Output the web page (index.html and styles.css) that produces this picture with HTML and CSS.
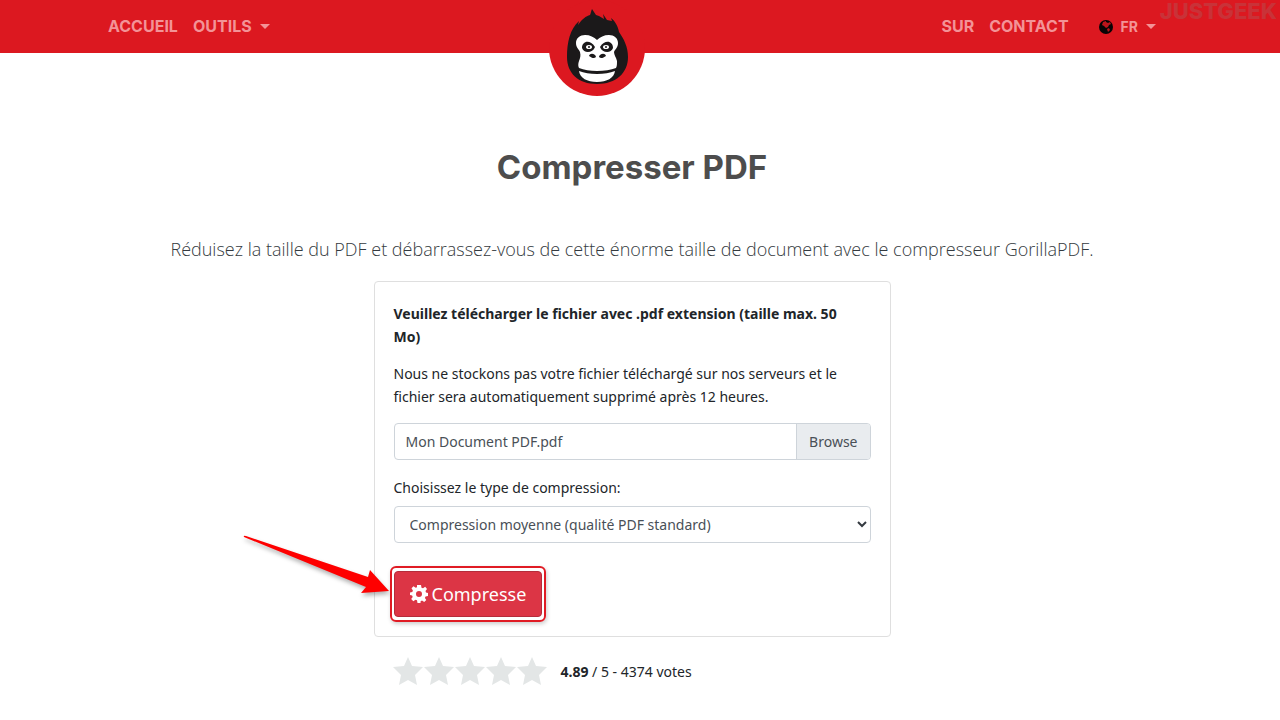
FILE: index.html
```html
<!DOCTYPE html>
<html lang="fr">
<head>
  <meta charset="UTF-8">
  <meta name="viewport" content="width=device-width, initial-scale=1.0">
  <title>Compresser PDF – GorillaPDF</title>
  <link rel="stylesheet" href="styles.css">
</head>
<body>
  <header class="header">
    <div class="container navbar">
      <nav class="nav">
        <a href="#">ACCUEIL</a>
        <a href="#" class="dropdown">OUTILS</a>
      </nav>

      <a href="#" class="logo" aria-label="GorillaPDF">
        <svg viewBox="0 0 96 96" width="96" height="96">
          <circle cx="48" cy="48" r="48" fill="#dc1820"/>
          <path fill="#1b191a" d="M18 57C18 42 21 29 30 21l-1 4c4-6 8-9 12-10 1-2 1-4 2-6l4 6 3 1 5 3-1-5 4 6 5 1-1-3c4 3 7 8 8 14 5 7 9 15 9 25 0 16-12 27-31 27S18 73 18 57z"/>
          <path fill="#fff" d="M27 43c0-5 4-8 9-8 5 0 9 2 12 5 3-3 7-5 12-5s9 3 9 8-3 6-4 9c0 3 2 5 3 9 0 3 0 5-1 7-5 2-12 3-19 3s-13-1-18-3c-1-2-1-4 0-7 1-3 2-5 1-9-1-3-4-4-4-9z"/>
          <path fill="#fff" d="M30 71c5 2 11 3 18 3s13-1 18-3c-1 7-8 11-18 11s-17-4-18-11z"/>
          <path fill="#1b191a" d="M33 48c0-7 8-9 13-1-2 6-11 7-13 1zM64 48c0-7-8-9-13-1 2 6 11 7 13 1z"/>
          <ellipse cx="40" cy="47" rx="3" ry="2" fill="#fff"/>
          <ellipse cx="57" cy="47" rx="3" ry="2" fill="#fff"/>
          <circle cx="40" cy="47" r="1" fill="#1b191a"/>
          <circle cx="57" cy="47" r="1" fill="#1b191a"/>
          <path fill="#1b191a" d="M40 56c1-4 7-2 7 1-2 2-4 1-7-1zM57 56c-1-4-7-2-7 1 2 2 4 1 7-1z"/>
        </svg>
      </a>

      <nav class="nav">
        <a href="#">SUR</a>
        <a href="#">CONTACT</a>
        <a href="#" class="dropdown lang">
          <svg viewBox="0 0 14 14" width="14" height="14" aria-hidden="true">
            <circle cx="7" cy="7" r="7" fill="#080405"/>
            <path fill="#dc1820" d="M4 2l3-1v1l2 1 2-1 1 2-2 1-1 2-2 1-2-2-2-1zM8 9l2-1 1 2-2 2z" opacity=".85"/>
          </svg>
          FR
        </a>
      </nav>
    </div>
    <span class="watermark">JUSTGEEK</span>
  </header>

  <main class="container main">
    <h1>Compresser PDF</h1>
    <p class="lead">Réduisez la taille du PDF et débarrassez-vous de cette énorme taille de document avec le compresseur GorillaPDF.</p>

    <div class="column">
      <form class="card">
        <p class="font-bold">Veuillez télécharger le fichier avec .pdf extension (taille max. 50<br> Mo)</p>
        <p>Nous ne stockons pas votre fichier téléchargé sur nos serveurs et le fichier sera automatiquement supprimé après 12 heures.</p>

        <div class="file">
          <input type="file" id="fichier" accept=".pdf">
          <label for="fichier">
            <span class="file-name">Mon Document PDF.pdf</span>
            <span class="file-browse">Browse</span>
          </label>
        </div>

        <label class="label" for="compression">Choisissez le type de compression:</label>
        <div class="select">
          <select id="compression">
            <option>Compression moyenne (qualité PDF standard)</option>
          </select>
          <svg viewBox="0 0 10 7" width="10" height="7" aria-hidden="true">
            <path d="M1 1l4 4 4-4" fill="none" stroke="#343a40" stroke-width="2"/>
          </svg>
        </div>

        <div class="action">
          <svg class="arrow" viewBox="0 0 160 80" width="160" height="80" aria-hidden="true">
            <path fill="#fe0000" d="M10 9q-1-2 2-1L134 49l2-7 19 21-28 2 5-6z"/>
          </svg>
          <button type="button" class="button">
            <svg viewBox="0 0 18 18" width="18" height="18" aria-hidden="true">
              <path fill="#fff" fill-rule="evenodd" d="M7 0h4l.5 2.700 1.500.6L15.200 1.800 17 4l-1.500 2.100.5 1.400 2 .5v3l-2.500.5-.6 1.400 1.400 2.200-2.100 2-2.200-1.500-1.400.6L10.500 18h-3L7 15.300l-1.500-.6-2.200 1.500-2.100-2.100 1.500-2.200-.6-1.400L0 10V7.500L2.300 7l.6-1.500L1.500 3.300l2-2.100 2.200 1.500L7 2.200zM9 6a3 3 0 100 6 3 3 0 000-6z"/>
            </svg>
            Compresse
          </button>
        </div>
      </form>

      <div class="rating">
        <div class="stars" role="img" aria-label="4.89 sur 5">
          <svg viewBox="0 0 30 28"><path d="M15 0l4 9 11 1-8 8 2 10-9-5-9 5 2-10-8-8 11-1z"/></svg>
          <svg viewBox="0 0 30 28"><path d="M15 0l4 9 11 1-8 8 2 10-9-5-9 5 2-10-8-8 11-1z"/></svg>
          <svg viewBox="0 0 30 28"><path d="M15 0l4 9 11 1-8 8 2 10-9-5-9 5 2-10-8-8 11-1z"/></svg>
          <svg viewBox="0 0 30 28"><path d="M15 0l4 9 11 1-8 8 2 10-9-5-9 5 2-10-8-8 11-1z"/></svg>
          <svg viewBox="0 0 30 28"><path d="M15 0l4 9 11 1-8 8 2 10-9-5-9 5 2-10-8-8 11-1z"/></svg>
        </div>
        <p><strong>4.89</strong> / 5 - 4374 votes</p>
      </div>
    </div>
  </main>
</body>
</html>
```
FILE: styles.css
```css
* {
  box-sizing: border-box;
}

body {
  margin: 0;
  background: #fff;
  color: #212529;
  font-family: "Noto Sans", "Open Sans", sans-serif;
  font-size: 14px;
  line-height: 23px;
}

p,
h1 {
  margin: 0;
}

.header {
  position: relative;
  background: #dc1820;
  padding-right: 16px;
}

.container {
  max-width: 1080px;
  margin: 0 auto;
  padding: 0 16px;
}

.navbar {
  display: flex;
  justify-content: space-between;
  height: 53px;
}

.nav {
  display: flex;
  align-items: center;
  gap: 15px;
  font-family: Inter, sans-serif;
  font-size: 16px;
  font-weight: 700;
}

.nav a {
  display: flex;
  align-items: center;
  color: #f39397;
  text-decoration: none;
}

.dropdown::after {
  content: "";
  margin-left: 8px;
  border: 5px solid transparent;
  border-top-color: currentColor;
  border-bottom: 0;
}

.nav .lang {
  gap: 8px;
  margin-left: 15px;
  font-size: 14px;
}

.lang::after {
  margin-left: 0;
}

/* le logo déborde sous la barre */
.logo {
  height: 96px;
  margin-right: 17px;
  z-index: 1;
}

.logo svg {
  display: block;
}

.watermark {
  position: absolute;
  top: 0;
  right: 3px;
  color: #c93238;
  font-family: Inter, sans-serif;
  font-size: 22px;
  font-weight: 800;
}

.main {
  max-width: none;
  padding-right: 32px;
  text-align: center;
}

h1 {
  padding-top: 94px;
  color: #4d4d4d;
  font-family: Inter, sans-serif;
  font-size: 33px;
  font-weight: 700;
  line-height: 40px;
}

.lead {
  margin: 48px 0 18px;
  color: #343a40;
  font-family: "Open Sans", sans-serif;
  font-size: 18px;
  font-weight: 300;
  line-height: 28px;
}

.column {
  max-width: 517px;
  margin: 0 auto;
  text-align: left;
}

.card {
  padding: 20px 19px 19px;
  border: 1px solid #dfdfdf;
  border-radius: 4px;
}

.card p {
  margin-bottom: 14px;
}

.card .font-bold {
  font-weight: 700;
}

.file {
  position: relative;
  margin-top: 15px;
}

.file input {
  position: absolute;
  width: 100%;
  height: 100%;
  margin: 0;
  opacity: 0;
}

.file label {
  display: flex;
  height: 37px;
  border: 1px solid #ced4da;
  border-radius: 4px;
  color: #495057;
  line-height: 35px;
  overflow: hidden;
}

.file-name {
  flex: 1;
  padding-left: 11px;
}

.file-browse {
  padding: 0 12px;
  border-left: 1px solid #ced4da;
  background: #e9ecef;
}

.label {
  display: block;
  margin: 16px 0 7px;
}

.select {
  position: relative;
}

.select select {
  display: block;
  width: 100%;
  height: 37px;
  padding: 0 15px;
  appearance: none;
  border: 1px solid #ced4da;
  border-radius: 4px;
  background: #fff;
  color: #495057;
  font: inherit;
}

.select svg {
  position: absolute;
  top: 15px;
  right: 4px;
}

.action {
  position: relative;
  width: fit-content;
  margin-top: 28px;
}

.action::after {
  content: "";
  position: absolute;
  inset: -5px -4px;
  border: 2px solid #e01b24;
  border-radius: 6px;
  box-shadow: 1px 2px 4px rgba(0, 0, 0, 0.2);
  pointer-events: none;
}

.arrow {
  position: absolute;
  top: -43px;
  right: 100%;
  filter: drop-shadow(1px 3px 2px rgba(0, 0, 0, 0.3));
}

.button {
  display: flex;
  align-items: center;
  gap: 4px;
  height: 46px;
  padding: 0 15px;
  border: 1px solid #b52c3b;
  border-radius: 4px;
  background: #dc3545;
  color: #fff;
  font: inherit;
  font-size: 18px;
  cursor: pointer;
}

.rating {
  display: flex;
  align-items: center;
  gap: 14px;
  padding: 20px 19px;
}

.stars {
  display: flex;
  gap: 1px;
}

.stars svg {
  width: 30px;
  height: 28px;
  fill: #e3e6e6;
}
```
